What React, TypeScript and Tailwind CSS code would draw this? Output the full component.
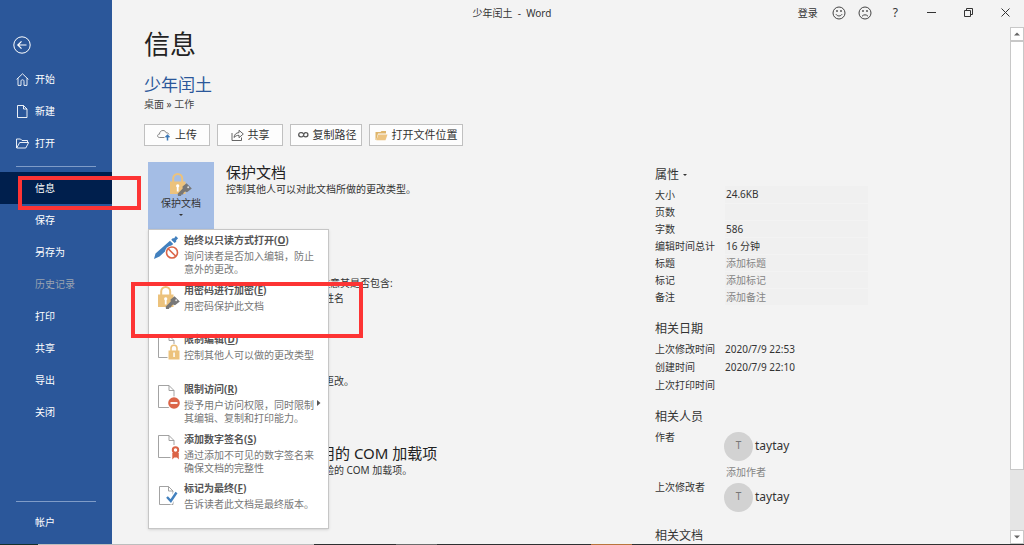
import type { ReactNode } from "react";

type NavEntry = { label: string; icon?: ReactNode; active?: boolean; disabled?: boolean };
type MenuEntry = { title: string; hotkey: string; lines: string[]; icon: ReactNode; submenu?: boolean };

// ---------- icons ----------

function HomeIcon() {
  return (
    <svg width="13" height="13" viewBox="0 0 13 13" fill="none" stroke="currentColor" strokeWidth=".9">
      <path d="M.6 6.4 6.5.8l5.9 5.6M2 5.2v7.2h3V8.2c0-.9.6-1.4 1.5-1.4S8 7.3 8 8.2v4.2h3V5.2" />
    </svg>
  );
}

function NewIcon() {
  return (
    <svg width="13" height="13" viewBox="0 0 13 13" fill="none" stroke="currentColor" strokeWidth=".9">
      <path d="M1.5.5h6L11 4v8.500H1.500zM7.500.5V4H11" />
    </svg>
  );
}

function OpenIcon() {
  return (
    <svg width="13" height="13" viewBox="0 0 13 13" fill="none" stroke="currentColor" strokeWidth=".9">
      <path d="M.5 11V2h4L6 3.500h5.500v2M.7 11l3-5.500h9L9.800 11z" />
    </svg>
  );
}

function CloudIcon() {
  return (
    <svg width="14" height="12" viewBox="0 0 14 12" fill="none">
      <path
        d="M7.500 8.500H2.600C1.300 8.500.6 7.800.6 6.800s.8-1.700 1.900-1.700C2.600 2.900 4 1.500 6 1.500c1.600 0 2.700.9 3.200 2.300 1.200-.1 2.400.5 2.800 1.600"
        stroke="#777"
        strokeWidth=".9"
      />
      <path d="M10.500 11.500V6.500M8.500 8.300l2-2 2 2" stroke="#3b78b8" strokeWidth="1.500" />
    </svg>
  );
}

function ShareIcon() {
  return (
    <svg width="13" height="12" viewBox="0 0 13 12" fill="none" stroke="#555" strokeWidth=".9">
      <path d="M1 4v7.500h9.500V8.500" />
      <path d="M3 8.500C3.300 5.500 5 3.800 8 3.600V1.300l4.300 3.700L8 8.700V6.300C5.800 6.300 4.300 7 3 8.500z" />
    </svg>
  );
}

function LinkIcon() {
  return (
    <svg width="13" height="8" viewBox="-2 0 13 8" fill="none" stroke="#555" strokeWidth="1.300">
      <path d="M5.400 2.600C4.900 2 4.300 1.700 3.400 1.700H2.800a2.100 2.100 0 0 0 0 4.200h.6c.9 0 1.300-.3 1.700-.9l1-2.200c.4-.7.9-1.100 1.700-1.100a2.100 2.100 0 0 1 0 4.200c-.9 0-1.500-.3-2-.9" />
    </svg>
  );
}

function FolderIcon() {
  return (
    <svg width="13" height="11" viewBox="0 0 13 11">
      <path d="M.5 10V2h5l1-1h4.500v2.500H3L1.300 10z" fill="#dfb56a" />
      <path d="M1.300 10.300 3.300 4.500h9.200l-2 5.800z" fill="#edc481" />
    </svg>
  );
}

function LockKeyIcon() {
  return (
    <svg className="h-6 w-6" viewBox="1 0 24 24">
      <path d="M5.200 11V6.500a4.500 4.500 0 0 1 9 0V11" fill="none" stroke="#ecc27c" strokeWidth="2" />
      <path d="M2 9.500h15.500v12.500H2z" fill="#ecc27c" />
      <path d="M9.700 12.200a1.700 1.700 0 0 1 .9 3.100v4.200H8.800v-4.200a1.700 1.700 0 0 1 .9-3.100z" fill="#fff" />
      <path
        d="M18.500 11.200 23.800 16.400 19 20.300l-2-.7-1.600 1.300-.3 1.500-1.500.2-.7 1.400H10l-.3-2.300 5-5.200-.2-2z"
        fill="#777"
      />
      <circle cx="20.200" cy="15.300" r="1" fill="#ddd" />
    </svg>
  );
}

function PenBlockIcon() {
  return (
    <svg className="-ml-1" width="26" height="26" viewBox="0 0 26 26">
      <path
        d="m1 24 1.500-5.500L17 5.700l3.200 3.200L6.500 21.500zM18.200 4.700l1.500-1.500h1.500L22.800 1l2.300 2.300-1.900 1.900v1.500l-1.600 1.400z"
        fill="#4280be"
      />
      <circle cx="19" cy="17.500" r="7" fill="#fff" />
      <circle cx="19" cy="17.500" r="5.500" fill="#fff" stroke="#db6447" strokeWidth="1.600" />
      <path d="m15.200 13.700 7.600 7.600" stroke="#db6447" strokeWidth="1.600" />
    </svg>
  );
}

function Page({ children }: { children?: ReactNode }) {
  return (
    <svg width="24" height="26" viewBox="0 0 24 26">
      <path d="M1.500 1.500H12l5 5v17H1.500zM12 1.500v5h5" fill="#fff" stroke="#999" strokeWidth=".9" />
      {children}
    </svg>
  );
}

function PageLockIcon() {
  return (
    <Page>
      <path d="M10.500 10H23v16H10.500z" fill="#fff" />
      <path d="M14 17v-2.700a3 3 0 0 1 6 0V17" fill="none" stroke="#ecc27c" strokeWidth="1.600" />
      <path d="M11.500 16.500h11v9h-11z" fill="#ecc27c" />
      <path d="M16.300 18.500h1.500V23h-1.500z" fill="#fff" />
    </Page>
  );
}

function PageStopIcon() {
  return (
    <Page>
      <circle cx="17" cy="19" r="6.800" fill="#fff" />
      <circle cx="17" cy="19" r="5.800" fill="#db6447" />
      <path d="M13.500 19h7" stroke="#fff" strokeWidth="1.800" />
    </Page>
  );
}

function PageSealIcon() {
  return (
    <Page>
      <path d="M13.500 11h9v14h-9z" fill="#fff" />
      <circle cx="18.500" cy="16" r="2.700" fill="none" stroke="#db6447" strokeWidth="2" />
      <path d="M15.300 19h6.500v6.500L20 23.500h-2.800l-1.900 2z" fill="#db6447" />
    </Page>
  );
}

function PageCheckIcon() {
  return (
    <svg width="24" height="26" viewBox="0 0 24 26">
      <path d="M2.500 3.500h9l4.500 4.500v13.500H2.500zM11.500 3.500V8H16" fill="#fff" stroke="#999" strokeWidth=".9" />
      <path d="m10 14 3.800 4L19.500 9.500" stroke="#fff" strokeWidth="5" fill="none" />
      <path d="m10 14 3.800 4L19.500 9.500" stroke="#4280be" strokeWidth="2.400" fill="none" />
    </svg>
  );
}

function Face({ sad }: { sad?: boolean }) {
  return (
    <svg width="14" height="14" viewBox="0 0 14 14" fill="none" stroke="#444">
      <circle cx="7" cy="7" r="6" />
      <path d="M5 4v2M9 4v2" strokeWidth="1.300" />
      <path d={sad ? "M4 10.300c1.500-2 4.500-2 6 0" : "M4 8.300c1.500 2.200 4.500 2.200 6 0"} />
    </svg>
  );
}

function Caret({ className }: { className?: string }) {
  return (
    <svg className={className} width="4" height="2" viewBox="0 0 4 2" fill="currentColor">
      <path d="M0 0h4L2 2z" />
    </svg>
  );
}

function ScrollArrow({ up }: { up?: boolean }) {
  return (
    <svg width="6" height="4" viewBox="0 0 6 4" fill="currentColor">
      <path d={up ? "M0 3.500h6L3 .5z" : "M0 .5h6L3 3.500z"} />
    </svg>
  );
}

// ---------- data ----------

const topNav: NavEntry[] = [
  { label: "开始", icon: <HomeIcon /> },
  { label: "新建", icon: <NewIcon /> },
  { label: "打开", icon: <OpenIcon /> },
];

const fileNav: NavEntry[] = [
  { label: "信息", active: true },
  { label: "保存" },
  { label: "另存为" },
  { label: "历史记录", disabled: true },
  { label: "打印" },
  { label: "共享" },
  { label: "导出" },
  { label: "关闭" },
];

const actions = [
  { label: "上传", icon: <CloudIcon />, width: "w-[66px]" },
  { label: "共享", icon: <ShareIcon />, width: "w-[66px]" },
  { label: "复制路径", icon: <LinkIcon />, width: "w-[72px]" },
  { label: "打开文件位置", icon: <FolderIcon />, width: "w-[94px]" },
];

const menu: MenuEntry[] = [
  { title: "始终以只读方式打开", hotkey: "O", lines: ["询问读者是否加入编辑，防止", "意外的更改。"], icon: <PenBlockIcon /> },
  { title: "用密码进行加密", hotkey: "E", lines: ["用密码保护此文档"], icon: <LockKeyIcon /> },
  { title: "限制编辑", hotkey: "D", lines: ["控制其他人可以做的更改类型"], icon: <PageLockIcon /> },
  { title: "限制访问", hotkey: "R", lines: ["授予用户访问权限，同时限制", "其编辑、复制和打印能力。"], icon: <PageStopIcon />, submenu: true },
  { title: "添加数字签名", hotkey: "S", lines: ["通过添加不可见的数字签名来", "确保文档的完整性"], icon: <PageSealIcon /> },
  { title: "标记为最终", hotkey: "F", lines: ["告诉读者此文档是最终版本。"], icon: <PageCheckIcon /> },
];

const props = [
  { label: "大小", value: "24.6KB" },
  { label: "页数", value: "" },
  { label: "字数", value: "586" },
  { label: "编辑时间总计", value: "16 分钟" },
  { label: "标题", hint: "添加标题" },
  { label: "标记", hint: "添加标记" },
  { label: "备注", hint: "添加备注" },
];

const dates = [
  { label: "上次修改时间", value: "2020/7/9 22:53" },
  { label: "创建时间", value: "2020/7/9 22:10" },
  { label: "上次打印时间", value: "" },
];

// ---------- pieces ----------

function NavButton({ item }: { item: NavEntry }) {
  return (
    <button
      disabled={item.disabled}
      className={`flex h-8 w-full shrink-0 items-center pl-4 text-left ${item.active ? "bg-[#001f4d]" : ""} ${
        item.disabled ? "text-[#9aa3b0]" : "text-white"
      }`}
    >
      <span className="w-[19px] shrink-0">{item.icon}</span>
      {item.label}
    </button>
  );
}

function Sidebar() {
  return (
    <nav className="flex w-28 shrink-0 flex-col bg-[#2b579a] pb-[6px] text-white">
      <button aria-label="返回" className="mt-9 ml-[13px] h-[18px] w-[18px]">
        <svg width="18" height="18" viewBox="0 0 18 18" fill="none" stroke="currentColor">
          <circle cx="9" cy="9" r="8.200" />
          <path d="M13.500 9H5M8.500 5.300 4.800 9l3.700 3.700" strokeWidth="1.200" />
        </svg>
      </button>
      <div className="mt-[9px]">
        {topNav.map((item) => (
          <NavButton key={item.label} item={item} />
        ))}
      </div>
      <hr className="mx-4 mt-[7px] mb-[5px] border-[#7f9cc8]" />
      {fileNav.map((item) => (
        <NavButton key={item.label} item={item} />
      ))}
      <hr className="mx-4 mt-auto mb-1 border-[#7f9cc8]" />
      <NavButton item={{ label: "帐户" }} />
    </nav>
  );
}

function TitleBar() {
  return (
    <header className="-ml-28 grid h-[27px] shrink-0 grid-cols-[1fr_auto_1fr] items-center pb-[2px]">
      <span />
      <span className="whitespace-pre">少年闰土  -  Word</span>
      <div className="flex items-center justify-end pr-[14px]">
        <button className="mr-[14px]">登录</button>
        <button aria-label="微笑" className="mr-3">
          <Face />
        </button>
        <button aria-label="哭脸" className="mr-[21px]">
          <Face sad />
        </button>
        <button aria-label="帮助" className="mr-[29px] text-xs">
          ?
        </button>
        <button aria-label="最小化" className="mr-7">
          <svg width="9" height="9" viewBox="0 0 9 9" stroke="#333">
            <path d="M0 4.500h9" />
          </svg>
        </button>
        <button aria-label="还原" className="mr-7">
          <svg width="9" height="9" viewBox="0 0 9 9" fill="none" stroke="#333">
            <path d="M.5 2.500h6v6h-6zM2.500 2.500v-2h6v6h-2" />
          </svg>
        </button>
        <button aria-label="关闭窗口">
          <svg width="9" height="9" viewBox="0 0 9 9" stroke="#333">
            <path d="m.5.5 8 8m0-8-8 8" />
          </svg>
        </button>
      </div>
    </header>
  );
}

function ProtectMenu() {
  return (
    <div
      role="menu"
      className="absolute top-full left-0 z-10 grid h-[300px] w-[181px] grid-rows-6 border border-[#c6c6c6] bg-white shadow-sm"
    >
      {menu.map((m) => (
        <button key={m.title} role="menuitem" className="flex min-h-0 items-start pt-[3px] pl-2 text-left">
          <span className="mt-[2px] flex w-[27px] shrink-0 justify-start">{m.icon}</span>
          <span className="flex-1">
            <span className="block leading-[14px] font-bold text-[#555]">
              {m.title}(<u>{m.hotkey}</u>)
            </span>
            <span className="mt-[3px] block leading-[13px] whitespace-nowrap text-[#777]">
              {m.lines.map((l) => (
                <span key={l} className="block">
                  {l}
                </span>
              ))}
            </span>
          </span>
          {m.submenu && (
            <svg className="mt-[18px] mr-[7px] shrink-0" width="4" height="6" viewBox="0 0 4 6" fill="#555">
              <path d="M0 0v6l3.500-3z" />
            </svg>
          )}
        </button>
      ))}
    </div>
  );
}

function Person() {
  return (
    <div className="flex h-[29px] items-center gap-[2px] text-xs">
      <span className="flex h-[29px] w-[29px] items-center justify-center rounded-full bg-[#d2d2d2] text-[10px] text-[#777]">
        T
      </span>
      taytay
    </div>
  );
}

function Properties() {
  return (
    <aside className="w-[355px] shrink-0 pt-[139px]">
      <h3 className="flex h-[18px] items-center text-xs">
        属性
        <Caret className="ml-1" />
      </h3>
      <table className="mt-[2px]">
        <tbody>
          {props.map((p) => (
            <tr key={p.label} className="h-[17px]">
              <th className="w-[70px] p-0 text-left font-normal">
                <label htmlFor={p.hint ? p.label : undefined}>{p.label}</label>
              </th>
              <td className="w-[143px] border-b border-[#f3f3f3] bg-[#f0f0f0] p-0 pl-px">
                {p.hint ? (
                  <input
                    id={p.label}
                    placeholder={p.hint}
                    className="block h-4 w-full bg-transparent placeholder:text-[#858585]"
                  />
                ) : (
                  p.value
                )}
              </td>
            </tr>
          ))}
        </tbody>
      </table>

      <h3 className="mt-[14px] text-xs leading-[18px]">相关日期</h3>
      <table className="mt-[2px]">
        <tbody>
          {dates.map((d) => (
            <tr key={d.label} className="h-[18px]">
              <th className="w-[70px] p-0 text-left font-normal">{d.label}</th>
              <td className="p-0">{d.value}</td>
            </tr>
          ))}
        </tbody>
      </table>

      <h3 className="mt-[14px] text-xs leading-[18px]">相关人员</h3>
      <div className="mt-1 grid grid-cols-[69px_1fr]">
        <span>作者</span>
        <div className="pt-[2px]">
          <Person />
          <input
            aria-label="添加作者"
            placeholder="添加作者"
            className="mt-1 block h-[15px] w-[140px] bg-transparent pl-[2px] placeholder:text-[#858585]"
          />
        </div>
        <span>上次修改者</span>
        <div className="pt-[3px]">
          <Person />
        </div>
      </div>

      <h3 className="mt-[15px] text-xs leading-[18px]">相关文档</h3>
    </aside>
  );
}

function Scrollbar() {
  return (
    <div className="flex w-[14px] shrink-0 flex-col bg-[#e5e5e5] text-[#666]">
      <div className="flex h-[14px] items-center justify-center border border-[#c8c8c8] bg-white">
        <ScrollArrow up />
      </div>
      <div className="h-[429px] border border-[#c8c8c8] bg-white" />
      <div className="mt-auto flex h-[14px] items-center justify-center border border-[#c8c8c8] bg-white">
        <ScrollArrow />
      </div>
    </div>
  );
}

export default function App() {
  return (
    <div className="relative flex h-screen flex-col overflow-hidden bg-[#f3f3f3] font-['Noto_Sans','Noto_Sans_CJK_SC',sans-serif] text-[10px] leading-[14px] text-[#333]">
      <div className="flex min-h-0 flex-1">
        <Sidebar />
        <main className="flex min-w-0 flex-1 flex-col">
          <TitleBar />
          <div className="flex min-h-0 flex-1">
            <div className="flex min-w-0 flex-1 overflow-hidden">
              <div className="min-w-0 flex-1 pl-8">
                <h1 className="text-[26px] leading-[34px] text-[#222]">信息</h1>
                <h2 className="mt-3 text-[17px] leading-6 text-[#2b579a]">少年闰土</h2>
                <p className="text-[#444]">桌面 » 工作</p>

                <div className="mt-[13px] flex gap-[7px] whitespace-nowrap">
                  {actions.map((a) => (
                    <button
                      key={a.label}
                      className={`flex h-[22px] items-center justify-center gap-1 border border-[#c0c0c0] bg-[#fdfdfd] text-[11px] ${a.width}`}
                    >
                      {a.icon}
                      {a.label}
                    </button>
                  ))}
                </div>

                <div className="mt-4 flex">
                  <div className="relative ml-1 h-[67px] w-[66px] shrink-0">
                    <button className="flex h-full w-full flex-col items-center bg-[#a4bde5] pt-[10px]">
                      <LockKeyIcon />
                      保护文档
                      <Caret className="mt-1" />
                    </button>
                    <ProtectMenu />
                  </div>
                  <div className="ml-3">
                    <h3 className="text-[15px] leading-5 text-[#222]">保护文档</h3>
                    <p>控制其他人可以对此文档所做的更改类型。</p>
                  </div>
                </div>

                {/* section text that sticks out from under the open menu */}
                <div className="mt-[47px] ml-44 flex flex-col whitespace-nowrap">
                  <p>注意其是否包含:</p>
                  <p className="mt-px pl-1">姓名</p>
                  <p className="mt-[69px] pl-1">更改。</p>
                  <h3 className="mt-[55px] text-[15px] leading-5 text-[#222]">用的 COM 加载项</h3>
                  <p className="pl-1">验的 COM 加载项。</p>
                </div>
              </div>
              <Properties />
            </div>
            <Scrollbar />
          </div>
        </main>
      </div>

      {/* top edge of the desktop taskbar */}
      <div className="flex h-px shrink-0 bg-[#2f3031]">
        <span className="w-[38px] bg-[#14302c]" />
        <span className="w-[27%] bg-[#bdbdbd]" />
        <span className="ml-[8%] w-[4%] bg-[#6b6b6b]" />
        <span className="ml-[15%] w-[4%] bg-[#b8743c]" />
      </div>

      {/* callout frames */}
      <div className="pointer-events-none absolute top-[176px] left-[18px] z-20 h-[34px] w-[123px] border-4 border-[#fd3434]" />
      <div className="pointer-events-none absolute top-[282px] left-[131px] z-20 h-[56px] w-[232px] border-4 border-[#fd3434]" />
    </div>
  );
}
